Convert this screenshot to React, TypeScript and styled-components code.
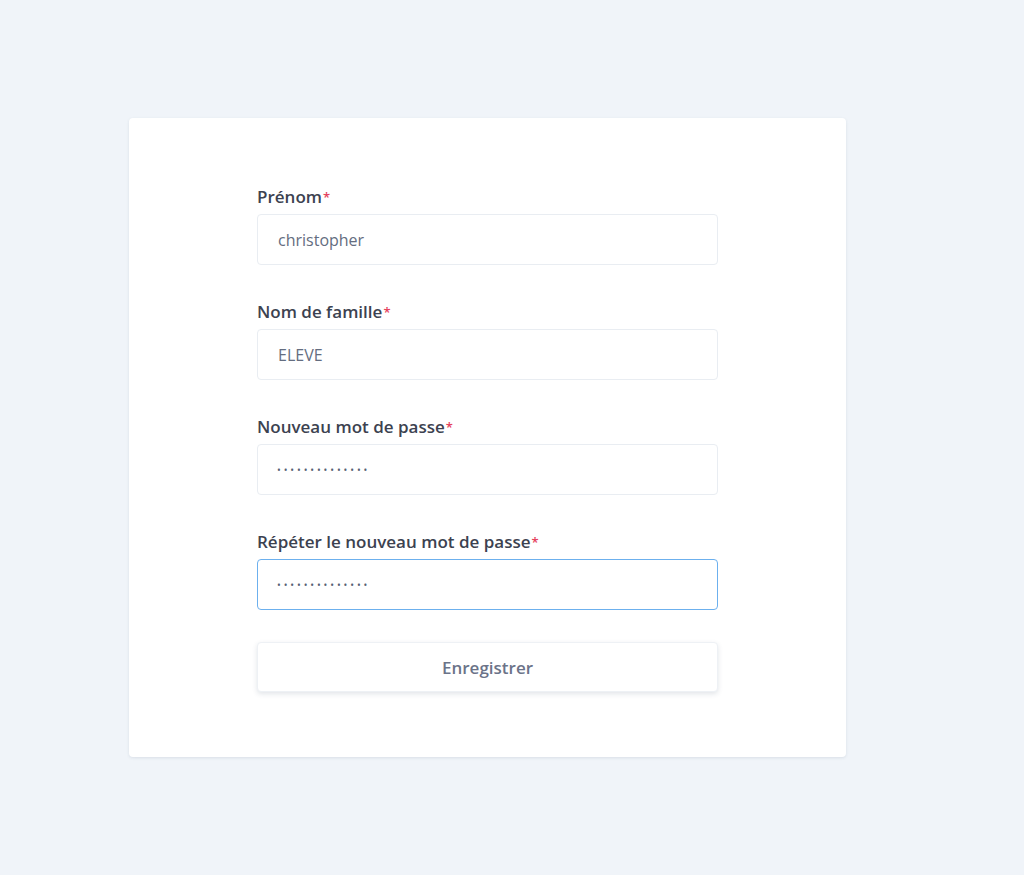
import React from 'react';
import styled, { createGlobalStyle } from 'styled-components';

const GlobalStyle = createGlobalStyle`
    body {
        margin: 0;
        background: #f0f4f9;
        font-family: "Open Sans", "Noto Sans", sans-serif;
    }
`

interface FieldType {
    label: string
    name: string
    type: string
    value: string
}

const fields: FieldType[] = [
    { label: "Prénom", name: "firstName", type: "text", value: "christopher" },
    { label: "Nom de famille", name: "lastName", type: "text", value: "ELEVE" },
    { label: "Nouveau mot de passe", name: "password", type: "password", value: "christopher123" },
    { label: "Répéter le nouveau mot de passe", name: "confirmPassword", type: "password", value: "christopher123" },
]

function App() {
    return (
        <>
            <GlobalStyle />
            <Page>
                <Card>
                    <Form onSubmit={e => e.preventDefault()}>
                        {fields.map((f, i) => (
                            <FormInner key={f.name}>
                                <Label htmlFor={f.name}>
                                    {f.label}<Required>*</Required>
                                </Label>
                                <CustomInput
                                    id={f.name}
                                    name={f.name}
                                    type={f.type}
                                    defaultValue={f.value}
                                    $active={i === fields.length - 1}
                                    autoFocus={i === fields.length - 1}
                                />
                            </FormInner>
                        ))}
                        <CustomButton type="submit">Enregistrer</CustomButton>
                    </Form>
                </Card>
            </Page>
        </>
    );
}

const Page = styled.div`
    min-height: 875px;
    padding: 118px 0 0 129px;
    box-sizing: border-box;
`

const Card = styled.div`
    width: 717px;
    box-sizing: border-box;
    padding: 68px 128px 65px;
    background: #fff;
    border-radius: 4px;
    box-shadow: 0 1px 3px rgba(60, 80, 110, 0.12);
`

const Form = styled.form`
    display: flex;
    flex-direction: column;
`

const FormInner = styled.div`
    display: flex;
    flex-direction: column;
    margin-bottom: 36px;
    &:nth-last-of-type(1) {
        margin-bottom: 32px;
    }
`

const Label = styled.label`
    font-size: 17px;
    line-height: 21px;
    font-weight: 600;
    color: #3c4250;
    margin-bottom: 7px;
    white-space: nowrap;
`

const Required = styled.span`
    color: #e5425c;
    font-size: 13px;
    line-height: 0;
    vertical-align: 1px;
    margin-left: 1px;
`

const CustomInput = styled.input<{ $active?: boolean }>`
    height: 51px;
    box-sizing: border-box;
    padding: 0 20px;
    border: 1px solid ${p => p.$active ? '#6cb0ee' : '#e9edf2'};
    border-radius: 4px;
    font-family: "Open Sans", "Noto Sans", sans-serif;
    font-size: 16px;
    color: #646d80;
    background: #fff;
    outline: none;
    caret-color: #333;
    &[type="password"] {
        font-size: 10px;
        letter-spacing: 2.9px;
        padding-left: 19px;
        color: #555e72;
    }
    &:focus {
        border-color: #6cb0ee;
    }
`

const CustomButton = styled.button`
    height: 50px;
    border: 1px solid #eef1f5;
    border-radius: 4px;
    background: #fff;
    box-shadow: 0 2px 5px rgba(60, 80, 110, 0.15);
    font-family: "Open Sans", "Noto Sans", sans-serif;
    font-size: 17px;
    font-weight: 600;
    color: #6b7388;
    cursor: pointer;
`

export default App;
